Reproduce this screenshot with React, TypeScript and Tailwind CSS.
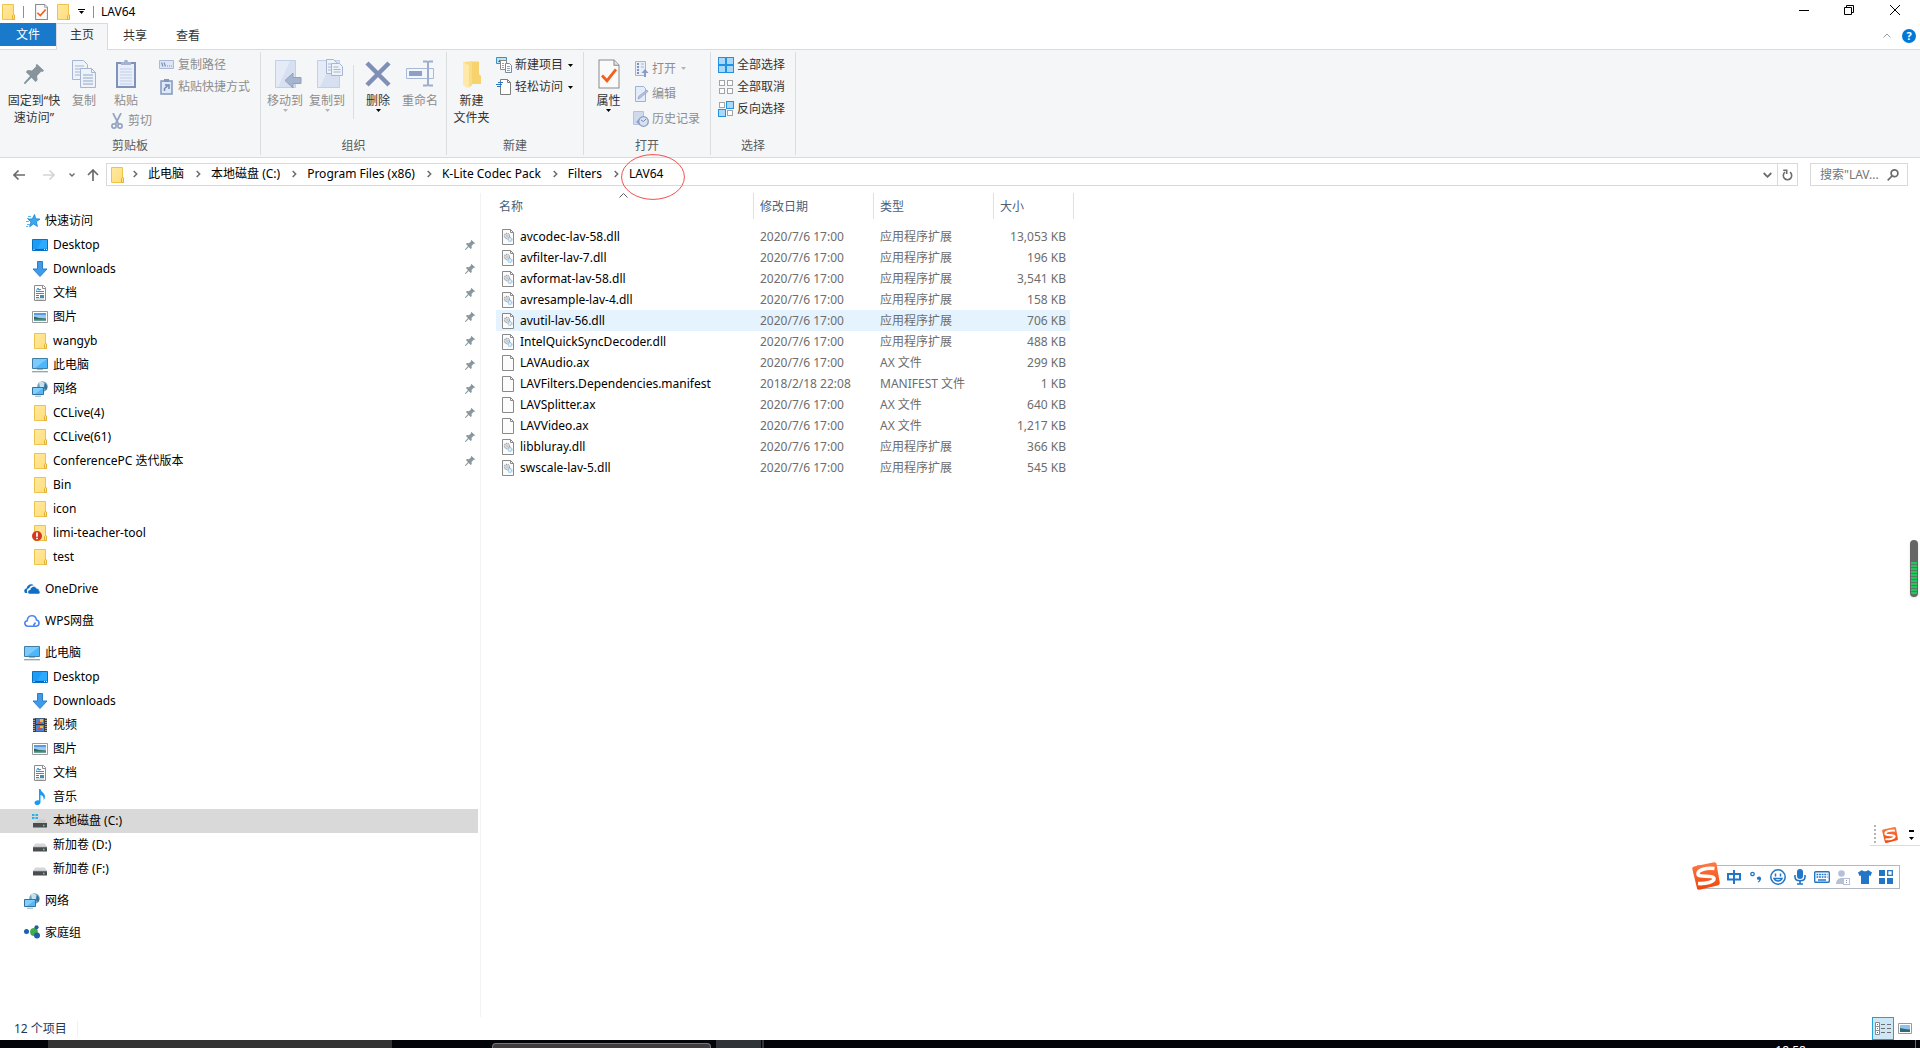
import type { ReactNode } from "react";

type P = { c?: string };

/* ---------- small icons ---------- */

const Folder = () => (
  <svg width="16" height="16" viewBox="0 0 16 16">
    <defs>
      <linearGradient id="fg" x1="0" y1="0" x2="1" y2="1">
        <stop offset="0" stopColor="#ffeaa0" />
        <stop offset="1" stopColor="#ffdc78" />
      </linearGradient>
    </defs>
    <path d="M2.500.5h11v10l1 .5v4.500h-12z" fill="url(#fg)" stroke="#eec24c" />
    <path d="M12.500 15.500v-4l1-1 1 .5v4.500z" fill="#ffe08a" stroke="#e3b23a" />
  </svg>
);

const ErrorFolder = () => (
  <svg width="16" height="16" viewBox="0 0 16 16">
    <path d="M2.500.5h11v10l1 .5v4.500h-12z" fill="#ffe491" stroke="#eec24c" />
    <path d="M12.500 15.500v-4l1-1 1 .5v4.500z" fill="#ffe08a" stroke="#e3b23a" />
    <circle cx="5" cy="11" r="5" fill="#cf3a20" />
    <path d="M5 7.500v4.200M5 12.800v1.500" stroke="#fff" strokeWidth="1.700" />
  </svg>
);

const CheckDoc = ({ big }: { big?: boolean }) => (
  <svg width={big ? 22 : 13} height={big ? 30 : 16} viewBox="0 0 22 29" preserveAspectRatio="none">
    <path d="M1 1h15l5 5v22H1z" fill="#fafafa" stroke="#8a8a8a" strokeWidth={big ? 1 : 1.800} />
    <path d="M16 1v5h5" fill="#e4e4e4" stroke="#8a8a8a" />
    <path d="M4 16l5 5 9-11" fill="none" stroke="#f2601d" strokeWidth="2.800" />
  </svg>
);

const DesktopI = () => (
  <svg width="16" height="16" viewBox="0 0 16 16">
    <path d="M.5 2.500h15v11H.5z" fill="#1b9df8" stroke="#0c71bd" />
    <path d="M10 3h5v8L5 12z" fill="#35aeff" opacity=".7" />
    <path d="M1 12.500h14" stroke="#0a62a8" />
    <path d="M1.500 12.500h1M12 12.500h1M14 12.500h1" stroke="#fff" />
  </svg>
);

const DownI = () => (
  <svg width="16" height="16" viewBox="0 0 16 16">
    <path d="M5.500.5h5v7.500h4.500L8 15.500 1 8h4.500z" fill="#3d9bea" stroke="#2b7fcb" />
  </svg>
);

const DocI = () => (
  <svg width="16" height="16" viewBox="0 0 16 16">
    <path d="M2.500.5h9l2 2v13h-11z" fill="#fcfcfc" stroke="#8c8c8c" />
    <path d="M10.500.5v3h3" fill="none" stroke="#8c8c8c" />
    <path d="M4.500 5.500l1.500-2.500 1 2.500M7 4.500h2M4 6.500h8M4 8.500h8" stroke="#2a96dd" fill="none" />
    <path d="M4 10.500h3M4 12.500h3" stroke="#777" />
    <path d="M8 10h4v3H8z" fill="#3a8fc0" />
    <path d="M4 14h8" stroke="#bbb" />
  </svg>
);

const PicI = () => (
  <svg width="16" height="16" viewBox="0 0 16 16">
    <path d="M.5 2.500h15v11H.5z" fill="#fff" stroke="#9a9a9a" />
    <path d="M2 4h12v8H2z" fill="#9cc9f2" />
    <path d="M2 4h12v2H2z" fill="#5a9be0" />
    <path d="M2 7.500l5 1.500 7 .5V11H2z" fill="#2f6b5e" />
    <path d="M2 10.500h12V12H2z" fill="#6fa3a0" />
  </svg>
);

const PcI = () => (
  <svg width="16" height="16" viewBox="0 0 16 16">
    <path d="M.5 1.500h15v10H.5z" fill="#4db7fb" stroke="#417ea5" />
    <path d="M1 2h14L3 11H1z" fill="#7dcbfd" />
    <path d="M5 12.500h6" stroke="#9fb6c6" />
    <path d="M0 14.700h16" stroke="#8da3b3" strokeWidth="1.300" />
  </svg>
);

const NetI = () => (
  <svg width="16" height="16" viewBox="0 0 16 16">
    <circle cx="10.500" cy="5.500" r="5.300" fill="#6fa5c4" />
    <path d="M7 2c2-2 4-1 5 0s-1 2 0 3-2 2-4 1z" fill="#c7e2ee" />
    <path d="M13 2c2 2 3 5 1 7l-2-2z" fill="#3a6f92" />
    <path d="M.5 6.500h11v7H.5z" fill="#55b9f6" stroke="#34719c" />
    <path d="M1 7h10L3 13H1z" fill="#82cefc" />
    <path d="M3 15.200h6" stroke="#8fb0c5" />
  </svg>
);

const StarI = () => (
  <svg width="16" height="16" viewBox="0 0 16 16">
    <path d="M10.500 1.500l1.200 4.300 4.300.3-3.600 2.600 1 4.800-3.800-2.600-4 2.900 1.400-4.900-3-2.800 4.200-.2z" fill="#3aa7ee" stroke="#1b83d1" strokeWidth=".8" />
    <path d="M4 3.500h3M3 5.500h2M2 8.500h3M3 11.500h3M2 13.500h2" stroke="#5db6f0" />
  </svg>
);

const OneDriveI = () => (
  <svg width="16" height="16" viewBox="0 0 16 16">
    <path d="M1.500 12C-.5 11 0 7.700 2.500 7.500 3 4 7 2 10 4.200c-2.500-.2-4 .8-4.700 2.800C3 7.500 2.300 10 3.500 12z" fill="#0f6fc6" />
    <path d="M5.500 13c-2.200-.4-2.300-3.800.6-4.200C6.500 5.500 11 4 12.700 7.500c2.500-.1 2.500 1.500 2.300 2 1.500 1 1.200 3.200-.3 3.500z" fill="#0f6fc6" stroke="#fff" strokeWidth=".5" />
  </svg>
);

const WpsI = () => (
  <svg width="16" height="16" viewBox="0 0 16 16" fill="none" stroke="#4b86f0" strokeWidth="1.600">
    <path d="M8 13.200H3.800C.2 13-.2 8.500 3.200 7.800 3.500 1.500 11.500 1 12.500 7c3.500.8 3.300 6-.3 6.200H9l2.500-3.700" />
  </svg>
);

const FilmI = () => (
  <svg width="16" height="16" viewBox="0 0 16 16">
    <path d="M1 1h14v14H1z" fill="#3c3c3c" />
    <path d="M4 1.500h8v13H4z" fill="#4b83d8" />
    <path d="M6 4h3v2H6zM6 11h4v2H6z" fill="#c9503c" />
    <path d="M8 2h3v3H8zM8 9h3v2H8z" fill="#e4c241" />
    <path d="M4 7.500h8" stroke="#2a2f55" />
    <path d="M2 1v14M14 1v14" stroke="#fff" strokeDasharray="1 1" />
  </svg>
);

const MusicI = () => (
  <svg width="16" height="16" viewBox="0 0 16 16">
    <path d="M7 0h1.500c.3 3 4.700 4 4.500 8-.1 1.600-1 2.500-1.500 3 .5-2.500-.5-4.500-3-5v7c0 4-6 3.800-6 1C2.500 12 5 11 7 11.500z" fill="#1a9bf3" />
  </svg>
);

const DriveI = () => (
  <svg width="16" height="16" viewBox="0 0 16 16">
    <path d="M3.500 6.500h9L15 10H1z" fill="#d4d6d8" />
    <path d="M1 10h14v4.500H1z" fill="#4a4d50" />
    <path d="M1 10.300h14" stroke="#808487" strokeWidth=".7" />
    <path d="M11 12.500h1.500" stroke="#4ef05a" strokeWidth="1.500" />
  </svg>
);

const SysDriveI = () => (
  <svg width="16" height="16" viewBox="0 0 16 16">
    <path d="M7 6.500h5.500L15 10H1.500z" fill="#c9cbcd" />
    <path d="M1 10h14v4.500H1z" fill="#4a4d50" />
    <path d="M11 12.500h1.500" stroke="#4ef05a" strokeWidth="1.500" />
    <path d="M0 1h2.500v2H0zM3.500 1H6v2H3.500zM0 4h2.500v2H0zM3.500 4H6v2H3.500z" fill="#1fb4f0" />
  </svg>
);

const HomeGroupI = () => (
  <svg width="16" height="16" viewBox="0 0 16 16">
    <circle cx="10" cy="7" r="3.900" fill="#3fae49" />
    <circle cx="2.500" cy="6.500" r="2.500" fill="#1f5fa8" />
    <circle cx="12.500" cy="2.300" r="2.100" fill="#1f5fa8" />
    <circle cx="13" cy="10.500" r="3" fill="#1f5fa8" />
  </svg>
);

const Pin = ({ size, fill }: { size: number; fill: string }) => (
  <svg width={size} height={size} viewBox="0 0 20 20">
    <path d="M13 0l7 6.500-1.500 1.500-1.300-.4-4.200 4.400.6 4-2 2-4.200-4.200L1.300 20 0 19.800.2 18.500 6 12 1.800 8l2-2 4.200.6 4.200-4.300L11.700 1z" fill={fill} />
  </svg>
);

const Caret = ({ c = "fill-black" }: P) => (
  <svg width="5" height="3" viewBox="0 0 5 3" className={c}>
    <path d="M0 0h5L2.500 3z" />
  </svg>
);

const CrumbArrow = () => (
  <svg width="5" height="8" viewBox="0 0 5 8" fill="none" stroke="#6b6b6b" strokeWidth="1.500">
    <path d="M.7 1L3.700 4 .7 7" />
  </svg>
);

const PlainFile = () => (
  <svg width="12" height="16" viewBox="0 0 12 16">
    <path d="M.5.5h8l3 3v12H.5z" fill="#fcfcfc" stroke="#8a8a8a" />
    <path d="M8.500.5v3h3" fill="none" stroke="#8a8a8a" />
  </svg>
);

const DllFile = () => (
  <svg width="12" height="16" viewBox="0 0 12 16">
    <path d="M.5.5h8l3 3v12H.5z" fill="#fcfcfc" stroke="#8a8a8a" />
    <path d="M8.500.5v3h3" fill="none" stroke="#8a8a8a" />
    <circle cx="5" cy="7" r="2.600" fill="#e6e8ea" stroke="#9aa0a6" strokeWidth="1.200" strokeDasharray="1.200 .6" />
    <circle cx="5" cy="7" r=".9" fill="#fff" stroke="#9aa0a6" strokeWidth=".6" />
    <circle cx="8" cy="10.500" r="1.900" fill="#e4f2fb" stroke="#8fbcdc" strokeWidth="1.200" strokeDasharray="1.100 .5" />
  </svg>
);

const SogouLogo = ({ size }: { size: number }) => (
  <svg width={size} height={size} viewBox="0 0 28 28">
    <defs>
      <linearGradient id="sg" x1="0" y1="0" x2="0" y2="1">
        <stop offset="0" stopColor="#ff7a45" />
        <stop offset="1" stopColor="#ef4509" />
      </linearGradient>
    </defs>
    <path d="M2 4.500L22 .2q2-.3 2.500 1.500l3.300 19q.2 2-1.500 2.500L7.500 27.800q-2 .3-2.500-1.500L.3 7q-.3-2 1.700-2.500z" fill="url(#sg)" />
    <path d="M22.500 6.500C15 5.500 5.500 7.500 6 12c.5 4 15.500.5 16 4.500.4 3.500-8.500 5.500-16 5" fill="none" stroke="#fff" strokeWidth="3.600" />
  </svg>
);

/* ---------- ribbon icons ---------- */

const page = "#eef2f9";
const edge = "#a5b5d2";

const CopyI = () => (
  <svg width="24" height="30" viewBox="0 0 24 30">
    <path d="M.5 1.500h11l4 4v15H.5z" fill={page} stroke={edge} />
    <path d="M3 7h9M3 10h9M3 13h5M3 16h5" stroke={edge} />
    <path d="M8.500 9.500h11l4 4v15h-15z" fill={page} stroke={edge} />
    <path d="M19.500 9.500v4h4" fill="none" stroke={edge} />
    <path d="M11 16h10M11 19h10M11 22h10M11 25h10" stroke="#93a6c9" />
  </svg>
);

const PasteI = () => (
  <svg width="20" height="30" viewBox="0 0 20 30">
    <path d="M1 4h18v24H1z" fill="#e8eefa" stroke="#7e92ba" strokeWidth="2" />
    <path d="M5 6V3h3c0-3 4-3 4 0h3v3z" fill="#a3b3d0" />
    <path d="M4 10h12M4 13h12M4 16h12M4 19h12M4 22h12M4 25h12" stroke="#c3cfe6" />
  </svg>
);

const ScissorsI = () => (
  <svg width="12" height="16" viewBox="0 0 12 16" fill="none" stroke="#93a4c3" strokeWidth="1.700">
    <path d="M2 0l5.500 11M10 0L4.500 11" />
    <circle cx="3" cy="13" r="2.100" />
    <circle cx="9" cy="13" r="2.100" />
  </svg>
);

const PathI = () => (
  <svg width="16" height="16" viewBox="0 0 16 16">
    <path d="M.5 3.500h14v8H.5z" fill="#dde6f4" stroke="#a9b9d5" />
    <path d="M2.500 5.500l1.500 4M5 5.500l1.500 4" stroke="#7d8fb5" strokeWidth="1.200" />
    <path d="M8 9h1M10 9h1M12 9h1" stroke="#7d8fb5" />
  </svg>
);

const ShortcutI = () => (
  <svg width="16" height="16" viewBox="0 0 16 16">
    <path d="M2 2h11v13H2z" fill="#dfe8f6" stroke="#8397bd" strokeWidth="1.500" />
    <path d="M5 0h5v3H5z" fill="#8397bd" />
    <path d="M5.500 12V9.500L8.500 7M6 6h4v4" fill="none" stroke="#6f86b4" strokeWidth="1.500" />
  </svg>
);

const MoveI = () => (
  <svg width="34" height="30" viewBox="-6 0 34 30">
    <path d="M1.500 1.500h20v27h-20z" fill="#d7e0f0" stroke="#c2cfe5" />
    <path d="M2 2h14L4 28H2z" fill="#e6ecf7" />
    <path d="M27 18.500v6h-8V29l-8-7.500 8-7.500v4.500z" fill="#a5b4cf" stroke="#8fa1c2" />
  </svg>
);

const CopyToI = () => (
  <svg width="34" height="30" viewBox="-6 0 34 30">
    <path d="M1.500 1.500h22v27h-22z" fill="#d7e0f0" stroke="#c2cfe5" />
    <path d="M2 2h14L4 28H2z" fill="#e6ecf7" />
    <path d="M10.500.5h7l3 3v11h-10z" fill={page} stroke={edge} />
    <path d="M15.500 4.500h8l3 3v9h-11z" fill={page} stroke={edge} />
    <path d="M17.500 8h5M17.500 10.500h7M17.500 13h7M12 5h3M12 8h3M12 11h3" stroke={edge} />
  </svg>
);

const DeleteI = () => (
  <svg width="28" height="30" viewBox="0 0 28 30">
    <path d="M3 4l22 22M25 4L3 26" stroke="#7f8fb5" strokeWidth="4.500" />
  </svg>
);

const RenameI = () => (
  <svg width="28" height="30" viewBox="0 0 28 30">
    <path d="M.5 9.500h27v10H.5z" fill="#f3f6fb" stroke="#a8b8d6" />
    <path d="M3 12h13v5H3z" fill="#8ea0c4" />
    <path d="M17 2.500h3.500q1.500 0 1.500 1.500v21q0 1.500-1.500 1.500H17M27 2.500h-3.500Q22 2.500 22 4M27 26.500h-3.500Q22 26.500 22 25" fill="none" stroke="#9dadcb" strokeWidth="2" />
  </svg>
);

const NewFolderI = () => (
  <svg width="20" height="30" viewBox="0 0 20 30">
    <path d="M8 2.500h9V15l2 2v8H6z" fill="#f6d36d" />
    <path d="M1 3l6 3.500v20L5 29l-4-3.500z" fill="#ffe9a8" />
    <path d="M1 3l6-.5h3v24L5.500 29 7 26V6.500z" fill="#f9dc84" />
  </svg>
);

const NewItemI = () => (
  <svg width="16" height="16" viewBox="0 0 16 16">
    <path d="M.5.5h10v6H.5z" fill="#bfe3f7" stroke="#3c8fc0" />
    <path d="M2 5l2-2.500L6 5z" fill="#2d6e62" />
    <path d="M4.500 3.500h6v9h-6z" fill="#fff" stroke="#8a8a8a" />
    <path d="M9.500 6.500h4l2 2v7h-6z" fill="#fff" stroke="#7d8894" />
    <path d="M11 9.500h3M11 11.500h3M11 13.500h3M6 6.500h2M6 8.500h2M6 10.500h2" stroke="#8fa5c0" />
  </svg>
);

const EasyI = () => (
  <svg width="16" height="16" viewBox="0 0 16 16">
    <path d="M4.500.5h7l3 3v12h-10z" fill="#fff" stroke="#7d7d7d" />
    <path d="M11.500.5v3h3" fill="none" stroke="#7d7d7d" />
    <path d="M2 3.500h5M0 5.500h6M1 7.500h4" stroke="#2e74c0" />
  </svg>
);

const OpenI = () => (
  <svg width="16" height="16" viewBox="0 0 16 16">
    <path d="M2.500.5h10v14h-10z" fill="#e9eff9" stroke="#a4b4d1" />
    <path d="M4 3h2M4 6h2M4 9h2M4 12h2" stroke="#8093bb" strokeWidth="2" />
    <path d="M8 3h3M8 6h3" stroke="#a4b4d1" />
    <path d="M11 16v-4H8.500l3.500-4 3.500 4H13v4z" fill="#8a9cc0" />
  </svg>
);

const EditI = () => (
  <svg width="16" height="16" viewBox="0 0 16 16">
    <path d="M2.500.5h8l2 2v13h-10z" fill="#e4ecf9" stroke="#9fb2d3" />
    <path d="M5 13l1-3 8-6 1 1.500-8 6.500z" fill="#b4c3de" stroke="#8da0c4" strokeWidth=".7" />
  </svg>
);

const HistoryI = () => (
  <svg width="16" height="16" viewBox="0 0 16 16">
    <path d="M.5.5h10v13H.5z" fill="#cfdaee" stroke="#b3c2de" />
    <circle cx="10.500" cy="10.500" r="4.800" fill="#d8e2f2" stroke="#8b9dc1" strokeWidth="1.300" />
    <path d="M10.500 10.500l2.500-2.500M10.500 10.500L8 9" stroke="#7288b5" />
    <path d="M3 11l3-3v5z" fill="#8b9dc1" />
  </svg>
);

const Squares = ({ on }: { on: boolean[] }) => (
  <svg width="16" height="16" viewBox="0 0 16 16">
    {on.map((s, i) => {
      const x = (i % 2) * 8;
      const y = Math.floor(i / 2) * 8;
      return s ? (
        <rect key={i} x={x + 0.5} y={y + 0.5} width="7" height="7" fill="#a8d8fb" stroke="#2490e0" />
      ) : (
        <rect key={i} x={x + 1.5} y={y + 1.5} width="5" height="5" fill="#fff" stroke="#a3a3a3" />
      );
    })}
  </svg>
);

/* ---------- ribbon parts ---------- */

function Big({ icon, lines, w, off, caret }: { icon: ReactNode; lines: string[]; w: string; off?: boolean; caret?: boolean }) {
  return (
    <button disabled={off} className={`flex flex-col items-center whitespace-nowrap pt-2 leading-[17px] ${w} ${off ? "text-[#8d8d8d]" : "text-[#333]"}`}>
      <span className="mb-[3px] flex h-[31px] items-center">{icon}</span>
      {lines.map((l) => (
        <span key={l}>{l}</span>
      ))}
      {caret && <Caret c={off ? "fill-[#b5b5b5]" : "fill-black"} />}
    </button>
  );
}

function Small({ icon, label, off, caret, h = "h-[22px]" }: { icon: ReactNode; label: string; off?: boolean; caret?: boolean; h?: string }) {
  return (
    <button disabled={off} className={`flex items-center gap-[3px] whitespace-nowrap ${h} ${off ? "text-[#8d8d8d]" : "text-[#333]"}`}>
      {icon}
      <span>{label}</span>
      {caret && (
        <span className="ml-0.5">
          <Caret c={off ? "fill-[#b5b5b5]" : "fill-black"} />
        </span>
      )}
    </button>
  );
}

function Group({ label, pad, children }: { label: string; pad: string; children: ReactNode }) {
  return (
    <section aria-label={label} className="my-0.5 flex flex-col border-r border-[#dcdddf]">
      <div className={`-mt-0.5 flex h-[88px] items-start ${pad}`}>{children}</div>
      <div className="text-center leading-4 text-[#5a5a5a]">{label}</div>
    </section>
  );
}

/* ---------- navigation ---------- */

type Nav = { label: string; icon: ReactNode; pin?: boolean; active?: boolean };

const sections: { head: Nav; items: Nav[] }[] = [
  {
    head: { label: "快速访问", icon: <StarI /> },
    items: [
      { label: "Desktop", icon: <DesktopI />, pin: true },
      { label: "Downloads", icon: <DownI />, pin: true },
      { label: "文档", icon: <DocI />, pin: true },
      { label: "图片", icon: <PicI />, pin: true },
      { label: "wangyb", icon: <Folder />, pin: true },
      { label: "此电脑", icon: <PcI />, pin: true },
      { label: "网络", icon: <NetI />, pin: true },
      { label: "CCLive(4)", icon: <Folder />, pin: true },
      { label: "CCLive(61)", icon: <Folder />, pin: true },
      { label: "ConferencePC 迭代版本", icon: <Folder />, pin: true },
      { label: "Bin", icon: <Folder /> },
      { label: "icon", icon: <Folder /> },
      { label: "limi-teacher-tool", icon: <ErrorFolder /> },
      { label: "test", icon: <Folder /> },
    ],
  },
  { head: { label: "OneDrive", icon: <OneDriveI /> }, items: [] },
  { head: { label: "WPS网盘", icon: <WpsI /> }, items: [] },
  {
    head: { label: "此电脑", icon: <PcI /> },
    items: [
      { label: "Desktop", icon: <DesktopI /> },
      { label: "Downloads", icon: <DownI /> },
      { label: "视频", icon: <FilmI /> },
      { label: "图片", icon: <PicI /> },
      { label: "文档", icon: <DocI /> },
      { label: "音乐", icon: <MusicI /> },
      { label: "本地磁盘 (C:)", icon: <SysDriveI />, active: true },
      { label: "新加卷 (D:)", icon: <DriveI /> },
      { label: "新加卷 (F:)", icon: <DriveI /> },
    ],
  },
  { head: { label: "网络", icon: <NetI /> }, items: [] },
  { head: { label: "家庭组", icon: <HomeGroupI /> }, items: [] },
];

function NavRow({ item, pl }: { item: Nav; pl: string }) {
  return (
    <a href="#" className={`mr-0.5 flex h-6 items-center gap-[5px] pr-[3px] text-black ${pl} ${item.active ? "bg-[#d9d9d9]" : ""}`}>
      {item.icon}
      <span className="flex-1">{item.label}</span>
      {item.pin && <Pin size={10} fill="#8a979f" />}
    </a>
  );
}

/* ---------- files ---------- */

const DLL = "应用程序扩展";
const files: [string, string, string, string][] = [
  ["avcodec-lav-58.dll", "2020/7/6 17:00", DLL, "13,053 KB"],
  ["avfilter-lav-7.dll", "2020/7/6 17:00", DLL, "196 KB"],
  ["avformat-lav-58.dll", "2020/7/6 17:00", DLL, "3,541 KB"],
  ["avresample-lav-4.dll", "2020/7/6 17:00", DLL, "158 KB"],
  ["avutil-lav-56.dll", "2020/7/6 17:00", DLL, "706 KB"],
  ["IntelQuickSyncDecoder.dll", "2020/7/6 17:00", DLL, "488 KB"],
  ["LAVAudio.ax", "2020/7/6 17:00", "AX 文件", "299 KB"],
  ["LAVFilters.Dependencies.manifest", "2018/2/18 22:08", "MANIFEST 文件", "1 KB"],
  ["LAVSplitter.ax", "2020/7/6 17:00", "AX 文件", "640 KB"],
  ["LAVVideo.ax", "2020/7/6 17:00", "AX 文件", "1,217 KB"],
  ["libbluray.dll", "2020/7/6 17:00", DLL, "366 KB"],
  ["swscale-lav-5.dll", "2020/7/6 17:00", DLL, "545 KB"],
];

const crumbs = ["此电脑", "本地磁盘 (C:)", "Program Files (x86)", "K-Lite Codec Pack", "Filters", "LAV64"];

const colHead = "flex h-[26px] w-full items-center border-r border-[#e0e0e0] pt-0.5 text-left font-normal text-[#4c607a]";

function FileTable() {
  return (
    <table className="ml-[15px] table-fixed border-collapse text-[#6d6d6d]">
      <colgroup>
        <col className="w-[258px]" />
        <col className="w-[120px]" />
        <col className="w-[120px]" />
        <col className="w-[76px]" />
        <col className="w-1" />
      </colgroup>
      <thead>
        <tr className="h-[33px] align-top">
          <th className="relative p-0">
            <button className={`${colHead} pl-[3px]`}>名称</button>
            <svg className="absolute left-[123px] top-0" width="9" height="5" viewBox="0 0 9 5" fill="none" stroke="#5a5a5a">
              <path d="M.5 4.500l4-4 4 4" />
            </svg>
          </th>
          <th className="p-0">
            <button className={`${colHead} pl-1.5`}>修改日期</button>
          </th>
          <th className="p-0">
            <button className={`${colHead} pl-1.5`}>类型</button>
          </th>
          <th className="p-0" colSpan={2}>
            <button className={`${colHead} pl-1.5`}>大小</button>
          </th>
        </tr>
      </thead>
      <tbody>
        {files.map(([name, date, type, size], i) => {
          const bg = i === 4 ? "bg-[#e5f3ff]" : "";
          return (
            <tr key={name} className="h-[21px] whitespace-nowrap leading-5">
              <td className={`p-0 ${bg}`}>
                <a href="#" className="flex items-center gap-1.5 pl-1.5 text-black">
                  {type === DLL ? <DllFile /> : <PlainFile />}
                  {name}
                </a>
              </td>
              <td className={`p-0 pl-1.5 ${bg}`}>{date}</td>
              <td className={`p-0 pl-1.5 ${bg}`}>{type}</td>
              <td className={`p-0 pr-1 text-right ${bg}`}>{size}</td>
              <td className="p-0" />
            </tr>
          );
        })}
      </tbody>
    </table>
  );
}

/* ---------- input-method bar ---------- */

function ImeBar() {
  return (
    <div className="absolute right-5 top-[865px] flex h-6 items-center border border-[#b2b7c1] bg-white pl-7 pr-[5px] text-[#2176c7]">
      <span className="absolute -left-1.5 -top-1">
        <SogouLogo size={28} />
      </span>
      <div className="flex items-center gap-1.5">
        <button aria-label="中文" className="flex w-4 justify-center">
          <svg width="14" height="14" viewBox="0 0 14 14" fill="none" stroke="currentColor" strokeWidth="2">
            <path d="M1 4h12v5.500H1zM7 0v14" />
          </svg>
        </button>
        <button aria-label="标点" className="flex w-4 justify-center">
          <svg width="12" height="14" viewBox="0 0 12 14">
            <circle cx="2.500" cy="4" r="1.700" fill="none" stroke="currentColor" strokeWidth="1.300" />
            <path d="M7 7.500c2-2 4.500-1 4 1.500-.3 2-1.500 3-3 3.500l-.3-.8c1-.5 1.500-1.200 1.500-1.900C7.500 10 6.500 9 7 7.500z" fill="currentColor" />
          </svg>
        </button>
        <button aria-label="表情">
          <svg width="16" height="16" viewBox="0 0 16 16" fill="none" stroke="currentColor" strokeWidth="1.500">
            <circle cx="8" cy="8" r="7.200" />
            <path d="M5.500 4.500v3M10.500 4.500v3M4 9.500c1.500 3.300 6.500 3.300 8 0z" />
          </svg>
        </button>
        <button aria-label="语音" className="flex w-4 justify-center">
          <svg width="12" height="16" viewBox="0 0 12 16">
            <rect x="3" y="0" width="6" height="10" rx="3" fill="currentColor" />
            <path d="M1 6v2c0 5 10 5 10 0V6M6 12v3M3 15h6" fill="none" stroke="currentColor" strokeWidth="1.600" />
          </svg>
        </button>
        <button aria-label="键盘">
          <svg width="16" height="12" viewBox="0 0 16 12">
            <rect x=".7" y=".7" width="14.600" height="10.600" rx="1" fill="#fff" stroke="currentColor" strokeWidth="1.400" />
            <path d="M2.500 3.500h11M2.500 6h11" stroke="currentColor" strokeWidth="1.600" strokeDasharray="1.800 .8" />
            <path d="M4 9h8" stroke="currentColor" strokeWidth="1.500" />
          </svg>
        </button>
        <button aria-label="账户" className="w-4">
          <svg width="14" height="15" viewBox="0 0 14 15">
            <circle cx="5.500" cy="3.500" r="3.300" fill="#b6c1d8" />
            <path d="M0 14c0-8 11-8 11 0z" fill="#b6c1d8" />
            <rect x="7.500" y="8.500" width="6" height="6" fill="#fff" stroke="#b6c1d8" />
            <path d="M10.500 10v1M10.500 12v1" stroke="#8b99b8" />
          </svg>
        </button>
        <button aria-label="皮肤">
          <svg width="14" height="14" viewBox="0 0 14 14">
            <path d="M4 0c1 1.800 5 1.800 6 0l4 2.500-1.500 3.500-1.500-.5V14H3V5.500L1.500 6 0 2.500z" fill="currentColor" />
          </svg>
        </button>
        <button aria-label="工具箱" className="flex w-4 justify-center">
          <svg width="14" height="14" viewBox="0 0 14 14" fill="currentColor">
            <path d="M0 0h6v6H0zM0 8h6v6H0zM8 8h6v6H8z" />
            <path d="M8.700.7h4.600v4.600H8.700z" fill="#fff" stroke="currentColor" strokeWidth="1.300" />
          </svg>
        </button>
      </div>
    </div>
  );
}

/* ---------- window ---------- */

export default function App() {
  return (
    <div className="relative flex h-screen flex-col overflow-hidden bg-white font-['Noto_Sans','Noto_Sans_CJK_SC',sans-serif] text-xs leading-4 text-black">
      <header className="flex h-[23px] items-center">
        <div className="flex items-center">
          <Folder />
          <span className="ml-[7px] mr-[11px] h-3 w-px bg-[#8f8f8f]" />
          <button aria-label="属性">
            <CheckDoc />
          </button>
          <button aria-label="新建文件夹" className="ml-[7px]">
            <Folder />
          </button>
          <button aria-label="自定义快速访问工具栏" className="ml-[7px] flex flex-col items-center gap-px">
            <span className="h-px w-[7px] bg-black" />
            <Caret />
          </button>
          <span className="ml-2 mr-[7px] h-3 w-px bg-[#8f8f8f]" />
          <h1>LAV64</h1>
        </div>
        <div className="ml-auto flex items-center pb-[3px] pr-5">
          <button aria-label="最小化" className="mr-[35px]">
            <svg width="10" height="10" viewBox="0 0 10 10" stroke="#000">
              <path d="M0 5.500h10" />
            </svg>
          </button>
          <button aria-label="还原" className="mr-9">
            <svg width="10" height="10" viewBox="0 0 10 10" fill="none" stroke="#000">
              <path d="M.5 2.500h7v7h-7zM2.500 2.500v-2h7v7h-2" />
            </svg>
          </button>
          <button aria-label="关闭">
            <svg width="10" height="10" viewBox="0 0 10 10" stroke="#000">
              <path d="M0 0l10 10M10 0L0 10" />
            </svg>
          </button>
        </div>
      </header>

      <nav aria-label="选项卡" className="flex h-[27px] items-start border-b border-[#dadbdc] text-[#333]">
        <button className="h-[23px] w-14 bg-[#1979ca] text-white">文件</button>
        <button className="-mb-px h-[27px] w-[52px] border border-b-0 border-[#dadbdc] bg-[#f5f6f7] pb-1">主页</button>
        <button className="h-[25px] w-[54px]">共享</button>
        <button className="h-[25px] w-[52px]">查看</button>
        <button aria-label="折叠功能区" className="ml-auto mt-2.5">
          <svg width="8" height="5" viewBox="0 0 8 5" fill="none" stroke="#9a9a9a">
            <path d="M.5 4.500L4 1l3.500 3.500" />
          </svg>
        </button>
        <button aria-label="帮助" className="ml-[11px] mr-1 mt-1.5 h-3.5 w-3.5 rounded-full bg-[#0078d7] text-[11px] font-bold leading-[14px] text-white">
          ?
        </button>
      </nav>

      <div className="flex h-[108px] shrink-0 border-b border-[#dadbdc] bg-[#f5f6f7]">
        <Group label="剪贴板" pad="pr-2.5">
          <Big w="w-[68px]" icon={<Pin size={20} fill="#87949b" />} lines={["固定到“快", "速访问”"]} />
          <Big w="w-8" off icon={<CopyI />} lines={["复制"]} />
          <div className="mr-[7px] flex flex-col">
            <Big w="w-[52px]" off icon={<PasteI />} lines={["粘贴"]} />
            <div className="mt-px flex justify-end">
              <Small off icon={<span className="mr-0.5"><ScissorsI /></span>} label="剪切" />
            </div>
          </div>
          <div className="flex flex-col pt-1">
            <Small off icon={<PathI />} label="复制路径" />
            <Small off icon={<ShortcutI />} label="粘贴快捷方式" />
          </div>
        </Group>
        <Group label="组织" pad="pr-2">
          <Big w="w-12" off caret icon={<MoveI />} lines={["移动到"]} />
          <Big w="w-9" off caret icon={<CopyToI />} lines={["复制到"]} />
          <span className="ml-2 mt-[15px] h-[54px] w-px bg-[#dcdddf]" />
          <Big w="w-12" caret icon={<DeleteI />} lines={["删除"]} />
          <Big w="w-9" off icon={<RenameI />} lines={["重命名"]} />
        </Group>
        <Group label="新建" pad="pr-2.5">
          <Big w="w-[49px]" icon={<NewFolderI />} lines={["新建", "文件夹"]} />
          <div className="flex flex-col pt-1">
            <Small caret icon={<NewItemI />} label="新建项目" />
            <Small caret icon={<EasyI />} label="轻松访问" />
          </div>
        </Group>
        <Group label="打开" pad="pr-2.5">
          <Big w="w-[49px]" caret icon={<CheckDoc big />} lines={["属性"]} />
          <div className="flex flex-col pt-1.5">
            <Small h="h-[25px]" off caret icon={<OpenI />} label="打开" />
            <Small h="h-[25px]" off icon={<EditI />} label="编辑" />
            <Small h="h-[25px]" off icon={<HistoryI />} label="历史记录" />
          </div>
        </Group>
        <Group label="选择" pad="pl-[7px] pr-2.5">
          <div className="flex flex-col pt-1">
            <Small icon={<Squares on={[true, true, true, true]} />} label="全部选择" />
            <Small icon={<Squares on={[false, false, false, false]} />} label="全部取消" />
            <Small icon={<Squares on={[false, true, true, false]} />} label="反向选择" />
          </div>
        </Group>
      </div>

      <div className="flex h-[35px] shrink-0 items-start pl-[13px] pr-3 pt-[5px]">
        <div className="flex h-[23px] items-center text-[#6b6b6b]">
          <button aria-label="后退">
            <svg width="12" height="10" viewBox="0 0 12 10" fill="none" stroke="currentColor" strokeWidth="1.600">
              <path d="M12 5H1M5.500.5L1 5l4.500 4.500" />
            </svg>
          </button>
          <button aria-label="前进" disabled className="ml-[18px] text-[#d5d5d5]">
            <svg width="12" height="10" viewBox="0 0 12 10" fill="none" stroke="currentColor" strokeWidth="1.600">
              <path d="M0 5h11M6.500.5L11 5 6.500 9.500" />
            </svg>
          </button>
          <button aria-label="最近位置" className="ml-3.5">
            <svg width="6" height="4" viewBox="0 0 6 4" fill="none" stroke="currentColor" strokeWidth="1.400">
              <path d="M.5.5L3 3 5.500.5" />
            </svg>
          </button>
          <button aria-label="上移" className="ml-3">
            <svg width="12" height="12" viewBox="0 0 12 12" fill="none" stroke="currentColor" strokeWidth="1.700">
              <path d="M6 12V1M1 6l5-5 5 5" />
            </svg>
          </button>
        </div>
        <div className="ml-[7px] flex h-[23px] flex-1 items-center border border-[#d9d9d9] pl-0.5">
          <Folder />
          {crumbs.map((c, i) => (
            <span key={c} className={`flex items-center pb-px ${i === 0 ? "ml-2" : "ml-3"}`}>
              <CrumbArrow />
              <button className="relative ml-2.5 whitespace-nowrap">
                {c}
                {i === 5 && (
                  <svg className="pointer-events-none absolute -left-2 -top-3" width="64" height="46" viewBox="0 0 64 46" fill="none" stroke="#f0504f">
                    <ellipse cx="32" cy="23" rx="31.400" ry="22.400" />
                  </svg>
                )}
              </button>
            </span>
          ))}
          <button aria-label="展开地址" className="ml-auto mr-[5px] text-[#6b6b6b]">
            <svg width="9" height="6" viewBox="0 0 9 6" fill="none" stroke="currentColor" strokeWidth="1.800">
              <path d="M.7 1l3.800 3.800L8.300 1" />
            </svg>
          </button>
          <button aria-label="刷新" className="flex h-full w-5 items-center justify-center border-l border-[#d9d9d9] text-[#6b6b6b]">
            <svg width="11" height="12" viewBox="0 0 11 12" fill="none" stroke="currentColor" strokeWidth="1.600">
              <path d="M8 3.200A4.200 4.200 0 1 1 3 3.200M1.200 1.300h3.500v3.700" />
            </svg>
          </button>
        </div>
        <label className="ml-3 flex h-[23px] w-[98px] items-center border border-[#d9d9d9] pl-[9px] pr-2">
          <input aria-label="搜索" placeholder={'搜索"LAV...'} className="w-0 flex-1 outline-none placeholder:text-[#757575]" />
          <svg width="12" height="12" viewBox="0 0 12 12" fill="none" stroke="#6b6b6b" strokeWidth="1.700">
            <circle cx="7.500" cy="4.300" r="3.400" />
            <path d="M5 7L.7 11.300" />
          </svg>
        </label>
      </div>

      <div className="flex min-h-0 flex-1">
        <nav aria-label="导航窗格" className="flex w-[481px] shrink-0 flex-col gap-2 overflow-hidden border-r border-[#f3f3f3] pt-4">
          {sections.map((s, i) => (
            <div key={i}>
              <NavRow item={s.head} pl="pl-6" />
              {s.items.map((it) => (
                <NavRow key={it.label} item={it} pl="pl-8" />
              ))}
            </div>
          ))}
        </nav>
        <main className="min-w-0 flex-1">
          <FileTable />
        </main>
      </div>

      <footer className="flex h-[23px] shrink-0 items-center text-[#1e395b]">
        <span className="pl-3.5">12 个项目</span>
        <span className="ml-2.5 h-4 w-px bg-[#f0f0f0]" />
        <button aria-label="详细信息" className="ml-auto flex h-[23px] w-[22px] items-center justify-center border border-[#26a0da] bg-[#cce8f6]">
          <svg width="17" height="13" viewBox="0 0 17 13" fill="none" stroke="#8a8a8a">
            <path d="M.5.5h4v12h-4zM.5 4.500h4M.5 8.500h4" fill="#fff" />
            <path d="M6 2.500h4M12 2.500h4M6 6.500h4M12 6.500h4M6 10.500h4M12 10.500h4" stroke="#6f6f6f" />
            <path d="M2 2.500h1" stroke="#2a7fd0" />
            <path d="M2 6.500h1" stroke="#2a7fd0" />
            <path d="M2 10.500h1" stroke="#d02a2a" />
          </svg>
        </button>
        <button aria-label="大图标" className="ml-1 mr-2">
          <svg width="14" height="11" viewBox="0 0 14 11">
            <path d="M.5.5h13v10H.5z" fill="#fff" stroke="#9a9a9a" />
            <path d="M2 2h10v7H2z" fill="#8ec2f3" />
            <path d="M2 5l5 1 5 .5V9H2z" fill="#2f6b6e" />
          </svg>
        </button>
      </footer>

      <div className="flex h-2 shrink-0 overflow-hidden bg-[#02040a]">
        <span className="ml-12 w-[344px] bg-[#333]" />
        <span className="ml-[100px] mt-[3px] w-[219px] rounded-t-sm border border-b-0 border-[#77747a] bg-[#3f3b3f]" />
        <span className="ml-[5px] w-[45px] bg-[#303438]" />
        <span className="ml-px w-0.5 bg-[#303438]" />
        <time className="ml-auto mt-[3px] text-white">18:58</time>
        <span className="ml-[109px] mr-1 w-px bg-[#6a6c70]" />
      </div>

      <div className="absolute right-0 top-[540px] flex h-[57px] w-2.5">
        <div className="flex h-full w-2 flex-col justify-end rounded-full bg-[#666] px-px pb-0.5 shadow">
          <span className="h-[33px] rounded-b-full bg-[repeating-linear-gradient(#22c55e_0_2px,#5b7a62_2px_3px)]" />
        </div>
      </div>

      <div className="absolute right-0 top-[825px] flex h-[21px] w-[50px] items-center border-b border-[#dcdcdc] bg-white pl-1">
        <span className="h-5 w-0.5 bg-[repeating-linear-gradient(#b5b5b5_0_2px,transparent_2px_4px)]" />
        <span className="ml-1.5">
          <SogouLogo size={16} />
        </span>
        <span className="ml-[11px] flex flex-col items-center gap-[5px]">
          <span className="h-0.5 w-[5px] bg-black" />
          <Caret />
        </span>
      </div>
      <ImeBar />
    </div>
  );
}
